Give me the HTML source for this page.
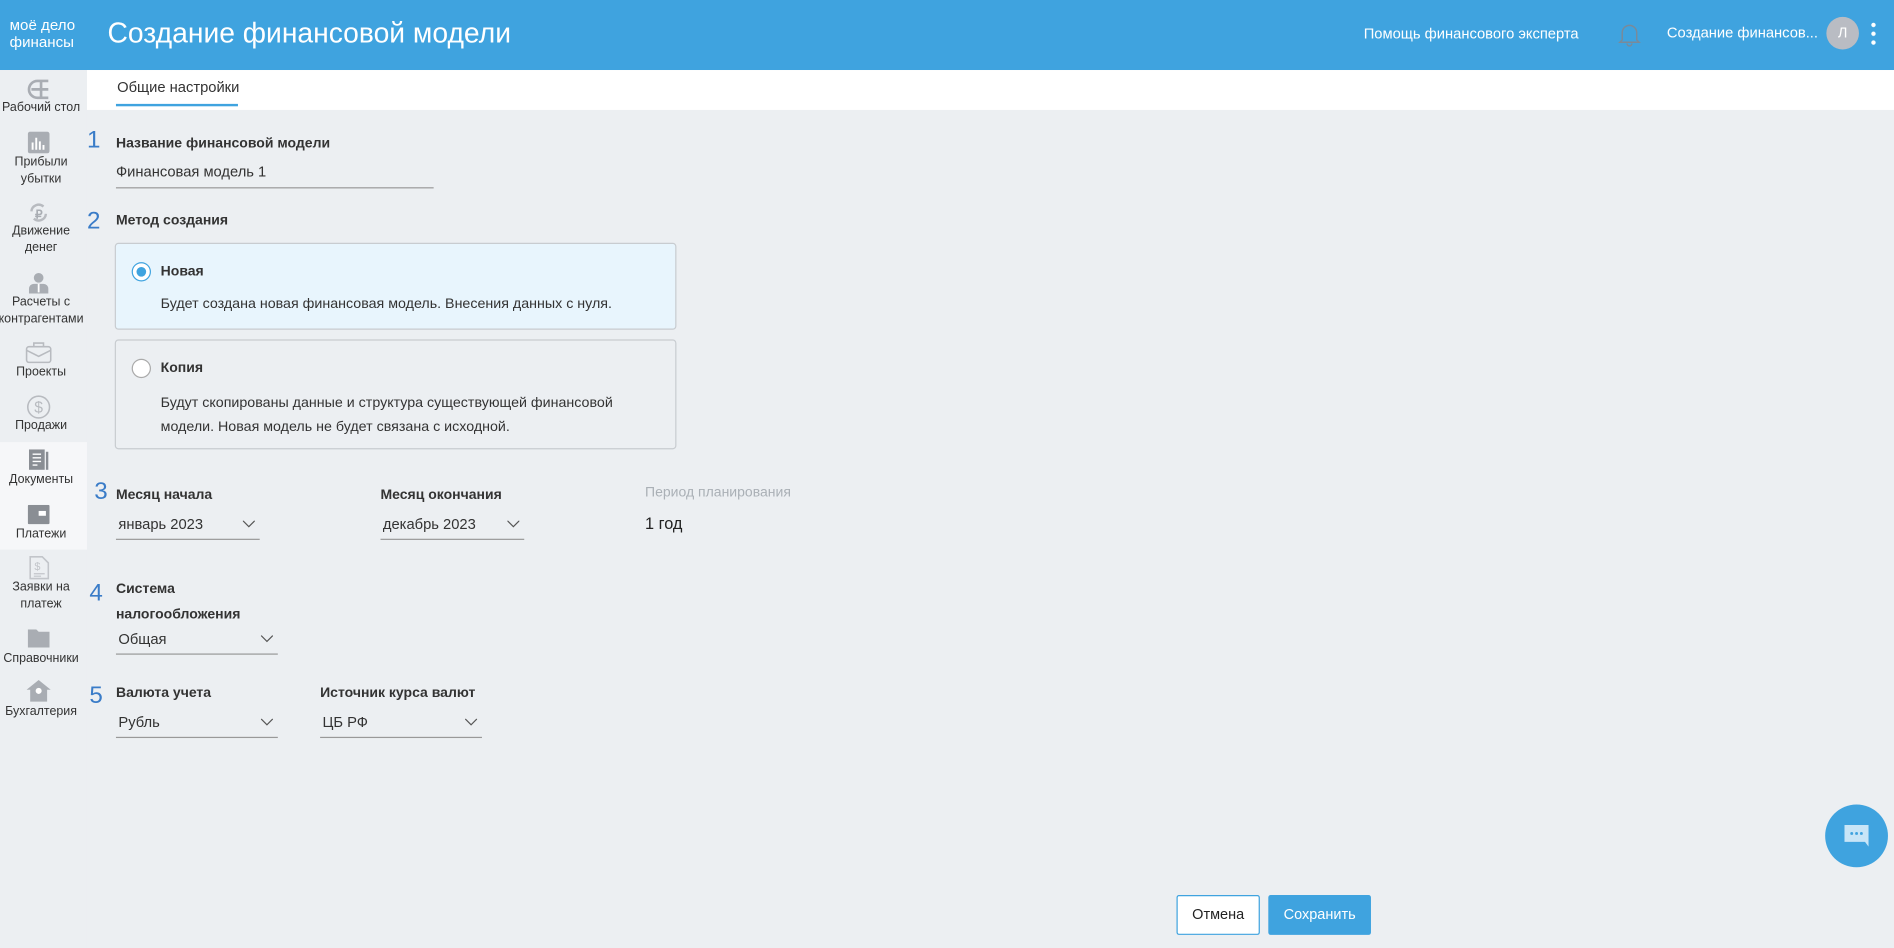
<!DOCTYPE html>
<html><head><meta charset="utf-8"><style>
*{margin:0;padding:0;box-sizing:border-box}
html,body{width:1894px;height:948px;overflow:hidden;background:#eceff2}
#w{position:absolute;left:0;top:0;width:1568px;height:785px;transform:scale(1.20791);transform-origin:0 0;font-family:"Liberation Sans",sans-serif;color:#333;background:#eceff2}
.a{position:absolute;white-space:nowrap}
.hd{position:absolute;left:0;top:0;width:1568px;height:58px;background:#3fa3df}
.sb{position:absolute;left:0;top:58px;width:72px;height:727px;background:#eceff2}
.sl{position:absolute;text-align:center;font-size:10.3px;line-height:14px;color:#333;left:-6px;width:80px}
.num{position:absolute;left:72px;font-size:20px;color:#3a7cc8;font-weight:300}
.lb{position:absolute;font-size:11.6px;font-weight:bold;color:#333}
.sel{position:absolute;height:22px;border-bottom:1px solid #999;font-size:12.2px;color:#333}
.sel span{position:absolute;left:2px;top:2px}
.sel svg{position:absolute;right:4px;top:6px}
.card{position:absolute;left:95px;width:465px;border:1px solid #c8ccd0;border-radius:3px}
</style></head><body><div id="w">
<div class="hd"></div>
<div class="a" style="left:8px;top:14px;color:#fff;font-size:12.5px;line-height:14px">моё дело<br>финансы</div>
<div class="a" style="left:89px;top:14px;color:#fff;font-size:23.4px">Создание финансовой модели</div>
<div class="a" style="left:1129px;top:21px;color:#fff;font-size:12.2px">Помощь финансового эксперта</div>
<svg class="a" style="left:1338px;top:17px" width="22" height="22" viewBox="0 0 22 22"><path d="M5 16V10a6 6 0 0 1 12 0v6l2 2H3z M9 19a2 2 0 0 0 4 0" fill="none" stroke="#7a8a99" stroke-width="1.2"/></svg>
<div class="a" style="left:1380px;top:20px;color:#fff;font-size:12.2px">Создание финансов...</div>
<div class="a" style="left:1512px;top:14px;width:27px;height:27px;border-radius:50%;background:#b9bcc3;color:#fff;font-size:12px;text-align:center;line-height:27px">Л</div>
<div class="a" style="left:1549px;top:17px;width:4px;height:22px;background:radial-gradient(circle,#fff 1.6px,transparent 2px) 0 0/4px 7.3px repeat-y"></div>

<div class="a" style="left:72px;top:58px;width:1496px;height:33px;background:#fff"></div>
<div class="a" style="left:97px;top:65px;font-size:12.2px;color:#333">Общие настройки</div>
<div class="a" style="left:96px;top:86px;width:101px;height:2px;background:#3fa3df"></div>

<div class="sb"></div>
<div class="a" style="left:0;top:366px;width:72px;height:89px;background:#f6f7f9"></div>
<svg class="a" style="left:22px;top:64px" width="20" height="20" viewBox="0 0 20 20"><path d="M18 3H9a7 7 0 0 0 0 14h9M4 10h14M12 3v14" fill="none" stroke="#a9adb3" stroke-width="2.2"/></svg>
<div class="sl" style="top:83px">Рабочий стол</div>
<svg class="a" style="left:23px;top:109px" width="18" height="18"><rect width="18" height="18" rx="2" fill="#a9adb3"/><path d="M4 15V9M7 15V5M10 15V8M13 15V11" stroke="#fff" stroke-width="1.6"/></svg>
<div class="sl" style="top:128px">Прибыли<br>убытки</div>
<svg class="a" style="left:23px;top:167px" width="18" height="18" viewBox="0 0 18 18"><path d="M3 8a6 6 0 0 1 10-4M15 10a6 6 0 0 1-10 4" fill="none" stroke="#b8bbc0" stroke-width="2"/><text x="6" y="14" font-size="10" font-weight="bold" fill="#a9adb3" font-family="Liberation Sans">₽</text></svg>
<div class="sl" style="top:185px">Движение<br>денег</div>
<svg class="a" style="left:23px;top:225px" width="18" height="18"><circle cx="9" cy="5" r="4" fill="#a9adb3"/><path d="M1 18v-4a4 4 0 0 1 4-4h8a4 4 0 0 1 4 4v4z" fill="#a9adb3"/><path d="M9 10v7" stroke="#fff" stroke-width="1.5"/></svg>
<div class="sl" style="top:244px">Расчеты с<br>контрагентами</div>
<svg class="a" style="left:21px;top:282px" width="22" height="19"><rect x="1" y="5" width="20" height="13" rx="2" fill="none" stroke="#b8bbc0" stroke-width="1.3"/><path d="M7 5V2h8v3M1 8l10 5 10-5" fill="none" stroke="#b8bbc0" stroke-width="1.3"/></svg>
<div class="sl" style="top:302px">Проекты</div>
<svg class="a" style="left:22px;top:327px" width="20" height="20"><circle cx="10" cy="10" r="9" fill="none" stroke="#b8bbc0" stroke-width="1.3"/><text x="10" y="14.5" text-anchor="middle" font-size="13" fill="#b8bbc0" font-family="Liberation Sans">$</text></svg>
<div class="sl" style="top:346px">Продажи</div>
<svg class="a" style="left:24px;top:372px" width="17" height="17"><rect width="13" height="17" fill="#8a8e94"/><path d="M3 4h7M3 7h7M3 10h7M3 13h4" stroke="#fff" stroke-width="1.2"/><rect x="14" y="2" width="2" height="15" fill="#8a8e94"/></svg>
<div class="sl" style="top:391px">Документы</div>
<svg class="a" style="left:23px;top:418px" width="18" height="16"><rect width="18" height="16" rx="1" fill="#8a8e94"/><rect x="9" y="5" width="6" height="4" fill="#fff"/></svg>
<div class="sl" style="top:436px">Платежи</div>
<svg class="a" style="left:24px;top:460px" width="17" height="20"><path d="M1 1h10l5 5v13H1z" fill="none" stroke="#c2c5ca" stroke-width="1.3"/><text x="7" y="12" text-anchor="middle" font-size="9" fill="#c2c5ca" font-family="Liberation Sans">$</text><path d="M4 15h9M4 17h6" stroke="#c2c5ca"/></svg>
<div class="sl" style="top:480px">Заявки на<br>платеж</div>
<svg class="a" style="left:23px;top:521px" width="18" height="15"><path d="M0 0h7l2 2h9v13H0z" fill="#a9adb3"/></svg>
<div class="sl" style="top:539px">Справочники</div>
<svg class="a" style="left:22px;top:563px" width="20" height="18"><path d="M10 0l10 8h-3v10H3V8H0z" fill="#a9adb3"/><circle cx="10" cy="9" r="2.5" fill="#fff"/></svg>
<div class="sl" style="top:583px">Бухгалтерия</div>

<div class="num" style="top:105px">1</div>
<div class="lb" style="left:96px;top:112px">Название финансовой модели</div>
<div class="a" style="left:96px;top:135px;width:263px;height:21px;border-bottom:1px solid #999;font-size:12.2px">Финансовая модель 1</div>

<div class="num" style="top:172px">2</div>
<div class="lb" style="left:96px;top:176px">Метод создания</div>
<div class="card" style="top:201px;height:72px;background:#e8f5fd"></div>
<div class="a" style="left:109px;top:217px;width:16px;height:16px;border-radius:50%;border:1.3px solid #3fa3df;background:#fff"></div>
<div class="a" style="left:113px;top:221px;width:8px;height:8px;border-radius:50%;background:#3fa3df"></div>
<div class="lb" style="left:133px;top:218px">Новая</div>
<div class="a" style="left:133px;top:244px;font-size:11.8px">Будет создана новая финансовая модель. Внесения данных с нуля.</div>
<div class="card" style="top:281px;height:91px"></div>
<div class="a" style="left:109px;top:297px;width:16px;height:16px;border-radius:50%;border:1px solid #aaa;background:#fff"></div>
<div class="lb" style="left:133px;top:298px">Копия</div>
<div class="a" style="left:133px;top:323px;font-size:11.8px;line-height:20px">Будут скопированы данные и структура существующей финансовой<br>модели. Новая модель не будет связана с исходной.</div>

<div class="num" style="top:396px;left:78px">3</div>
<div class="lb" style="left:96px;top:403px">Месяц начала</div>
<div class="sel" style="left:96px;top:425px;width:119px"><span>январь 2023</span><svg width="10" height="6"><path d="M0 0l5 5 5-5" fill="none" stroke="#555"/></svg></div>
<div class="lb" style="left:315px;top:403px">Месяц окончания</div>
<div class="sel" style="left:315px;top:425px;width:119px"><span>декабрь 2023</span><svg width="10" height="6"><path d="M0 0l5 5 5-5" fill="none" stroke="#555"/></svg></div>
<div class="a" style="left:534px;top:401px;font-size:11.6px;color:#aab0b6">Период планирования</div>
<div class="a" style="left:534px;top:426px;font-size:13.5px;color:#222">1 год</div>

<div class="num" style="top:480px;left:74px">4</div>
<div class="lb" style="left:96px;top:477px;line-height:21px">Система<br>налогообложения</div>
<div class="sel" style="left:96px;top:520px;width:134px"><span>Общая</span><svg width="10" height="6"><path d="M0 0l5 5 5-5" fill="none" stroke="#555"/></svg></div>

<div class="num" style="top:565px;left:74px">5</div>
<div class="lb" style="left:96px;top:567px">Валюта учета</div>
<div class="sel" style="left:96px;top:589px;width:134px"><span>Рубль</span><svg width="10" height="6"><path d="M0 0l5 5 5-5" fill="none" stroke="#555"/></svg></div>
<div class="lb" style="left:265px;top:567px">Источник курса валют</div>
<div class="sel" style="left:265px;top:589px;width:134px"><span>ЦБ РФ</span><svg width="10" height="6"><path d="M0 0l5 5 5-5" fill="none" stroke="#555"/></svg></div>

<div class="a" style="left:974px;top:741px;width:69px;height:33px;border:1px solid #3fa3df;border-radius:2px;background:#fff;font-size:12px;text-align:center;line-height:31px;color:#222">Отмена</div>
<div class="a" style="left:1050px;top:741px;width:85px;height:33px;border-radius:2px;background:#3fa3df;font-size:12px;text-align:center;line-height:33px;color:#fff">Сохранить</div>

<div class="a" style="left:1511px;top:666px;width:52px;height:52px;border-radius:50%;background:#3fa3df"></div>
<svg class="a" style="left:1527px;top:683px" width="20" height="20"><path d="M0 0h20v18l-3-4H0z" fill="#c8e5f7"/><circle cx="6" cy="7" r="1.2" fill="#3fa3df"/><circle cx="10" cy="7" r="1.2" fill="#3fa3df"/><circle cx="14" cy="7" r="1.2" fill="#3fa3df"/></svg>
</div></body></html>
